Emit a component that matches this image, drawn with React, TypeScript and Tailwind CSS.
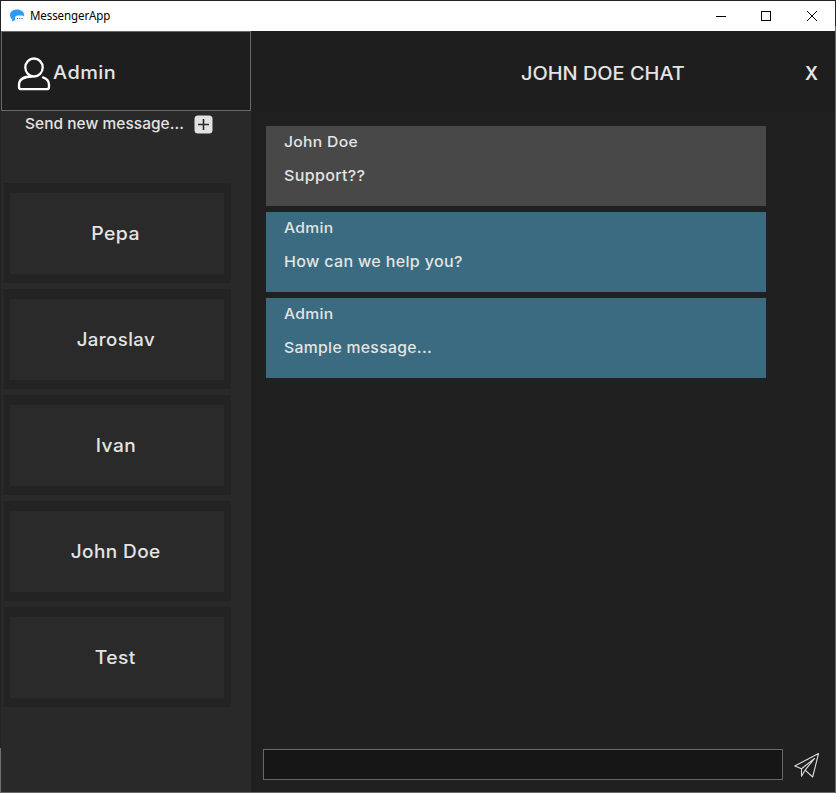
import React from "react";

const contacts = [
  { name: "Pepa", fit: "scale-x-[1.08] -translate-x-[1px]" },
  { name: "Jaroslav", fit: "scale-x-[1.035] -translate-x-[1px]" },
  { name: "Ivan", fit: "scale-x-[1.06] -translate-x-[1px]" },
  { name: "John Doe", fit: "scale-x-[1.055] -translate-x-[1px]" },
  { name: "Test", fit: "scale-x-[1.07] -translate-x-[2px]" },
];

const messages = [
  { author: "John Doe", text: "Support??", own: false, fit: "scale-x-[1.07]" },
  { author: "Admin", text: "How can we help you?", own: true, fit: "scale-x-[1.07]" },
  { author: "Admin", text: "Sample message...", own: true, fit: "scale-x-[1.05]" },
];

function TitleBar() {
  return (
    <header className="flex h-[30px] shrink-0 items-center bg-white text-black">
      <svg className="ml-[9px] h-[14px] w-[15px]" viewBox="0 0 15 14">
        <path d="M7 .5C3 .5 0 2.700 0 6c0 2 .8 3.300 2.200 4.400L2 12.500l2.800-1.200H9c3-.3 5.200-2.600 5.200-5.200C14.200 2.800 11 .5 7 .5Z" fill="#2b9df4" />
        <rect x="5" y="6.500" width="9.500" height="6" rx="2.800" fill="#eef6fd" />
        <path d="M7 9.500h1M9.300 9.500h1M11.600 9.500h1" stroke="#33587a" strokeWidth="1.100" />
      </svg>
      <span className="ml-[5px] inline-block origin-left scale-x-[0.96] font-['Noto_Sans',sans-serif] text-[12px] font-normal leading-[16px] tracking-[-0.1px]">MessengerApp</span>
      <svg className="ml-auto mr-[16px] mb-px h-[12px] w-[103px]" viewBox="0 0 103 12" fill="none" stroke="#000" shapeRendering="crispEdges">
        <path d="M0 6.500h10M45.500 1.500h9v9h-9z" />
        <path d="M91 1l10 10M101 1L91 11" shapeRendering="auto" />
      </svg>
    </header>
  );
}

function Contact({ name, fit }: { name: string; fit: string }) {
  return (
    <button className="flex h-[100px] w-[227px] items-center justify-center border-t-[10px] border-r-[7px] border-b-[9px] border-l-[6px] border-[#232323] bg-[#2a2a2a] text-[18px] leading-[24px]">
      <span className={`inline-block tracking-[0.4px] ${fit}`}>{name}</span>
    </button>
  );
}

function Sidebar() {
  return (
    <aside className="flex w-[250px] shrink-0 flex-col bg-[#292929]">
      <div className="flex h-[80px] shrink-0 items-center border border-[#686868] bg-[#1e1e1e] pl-[15px]">
        <svg className="mt-[6px] h-[34px] w-[34px]" viewBox="0 0 34 34" fill="none" stroke="#fff" strokeWidth="2.300" strokeLinecap="round">
          <ellipse cx="17" cy="10.500" rx="8.700" ry="9" />
          <path d="M15 19.500C7 19.500 2 22.500 2 28v2c0 1.400.8 2.200 2.200 2.200h25.600c1.400 0 2.200-.8 2.200-2.200v-2c0-3.700-2.300-6.300-6-7.600" />
        </svg>
        <span className="ml-[2px] mt-[4px] inline-block origin-left scale-x-[1.105] text-[18px] leading-[24px] tracking-[0.4px]">Admin</span>
      </div>
      <div className="flex h-[26px] items-center pl-6">
        <span className="w-[169px] whitespace-nowrap text-[15px] leading-5">
          <span className="inline-block origin-left scale-x-[1.03] tracking-[0.05px]">Send new message...</span>
        </span>
        <svg className="h-[19px] w-[19px]" viewBox="0 0 19 19">
          <rect x=".5" y=".5" width="18" height="18" rx="3.500" fill="#e2e2e2" />
          <path d="M4 9.500h11M9.500 4v11" stroke="#292929" strokeWidth="1.600" />
        </svg>
      </div>
      <nav className="ml-[3px] mt-[46px] flex flex-col gap-[6px]">
        {contacts.map((c) => <Contact key={c.name} {...c} />)}
      </nav>
    </aside>
  );
}

function Chat() {
  return (
    <main className="flex min-w-0 flex-1 flex-col bg-[#202020]">
      <div className="flex h-[80px] shrink-0 items-center bg-[#1e1e1e] pl-[270px] pr-[17px] text-[18px] leading-[24px]">
        <h1 className="mt-[5px] origin-left scale-x-[1.107] whitespace-nowrap">JOHN DOE CHAT</h1>
        <button className="ml-auto mt-[5px] font-semibold">X</button>
      </div>
      <div className="ml-[15px] mt-[15px] flex w-[500px] flex-col gap-[6px]">
        {messages.map((m, i) => (
          <article key={i} className={`flex h-[80px] flex-col items-start pl-[18px] pt-[6px] leading-5 ${m.own ? "bg-[#3a6b80]" : "bg-[#484848]"}`}>
            <span className="origin-left scale-x-[1.08] text-[14.5px] tracking-[0.3px]">{m.author}</span>
            <p className={`mt-[14px] origin-left text-[15px] tracking-[0.3px] ${m.fit}`}>{m.text}</p>
          </article>
        ))}
      </div>
      <form className="mt-auto mb-[12px] flex items-center pl-[12px]">
        <input className="h-[31px] w-[520px] border border-[#686868] bg-[#161616] px-2 text-[15px] outline-none" />
        <svg className="ml-[11px] mt-[1px] h-[26px] w-[26px]" viewBox="0 0 26 26" fill="none" stroke="#ddd" strokeWidth="1.100" strokeLinejoin="round">
          <path d="M24.500 1.500.8 14l6.700 2.800v7.400l3.600-6L18.700 25 24.500 1.500ZM7.500 16.800 20.500 6.500 11.100 18.200" />
        </svg>
      </form>
    </main>
  );
}

export default function App() {
  return (
    <div className="flex h-[793px] w-[836px] bg-[#222222] font-['Inter',sans-serif] font-medium text-[#e4e4e4]">
      <div className="flex w-px shrink-0 flex-col justify-end"><div className="h-[45px] bg-[#707070]" /></div>
      <div className="flex min-w-0 flex-1 flex-col border-b border-b-[#686868] pt-px">
        <TitleBar />
        <div className="flex min-h-0 flex-1"><Sidebar /><Chat /></div>
      </div>
      <div className="w-px shrink-0 pt-[26px]"><div className="h-full bg-[#686868]" /></div>
    </div>
  );
}
